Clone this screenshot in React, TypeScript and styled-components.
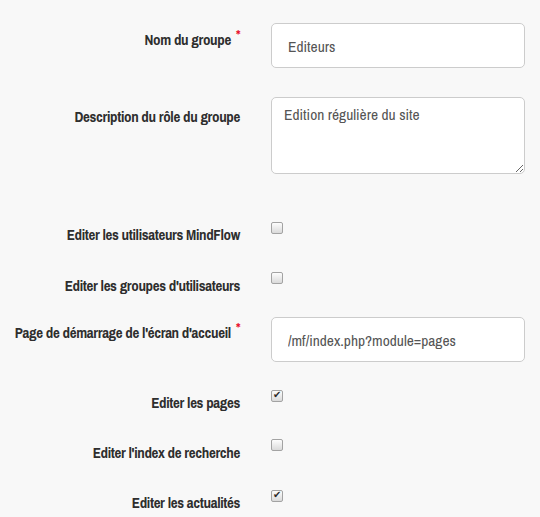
import * as React from "react";
import styled, { createGlobalStyle } from "styled-components";

const GlobalStyle = createGlobalStyle`
  html, body {
    margin: 0;
    padding: 0;
    background: #f8f8f8;
  }
  body {
    font-family: "Liberation Sans Narrow", "Archivo Narrow", "DejaVu Sans Condensed", sans-serif;
    color: #333;
  }
`;

const Form = styled.form`
  display: flex;
  flex-direction: column;
  padding-top: 23px;
`;

const Row = styled.div<{ $height: number }>`
  display: grid;
  grid-template-columns: 240px 254px;
  column-gap: 31px;
  align-items: start;
  height: ${(p) => p.$height}px;
`;

const Label = styled.label<{ $offset: number }>`
  justify-self: end;
  padding-top: ${(p) => p.$offset}px;
  font-size: 15px;
  font-weight: 700;
  letter-spacing: -0.35px;
  line-height: 17px;
  color: #2e2e2e;
  text-align: right;
  white-space: nowrap;
`;

const Required = styled.span`
  color: #e8112d;
  font-size: 14px;
  position: relative;
  top: -5px;
  margin-left: 5px;
`;

const TextInput = styled.input`
  box-sizing: border-box;
  width: 254px;
  height: 45px;
  padding: 2px 16px 0;
  border: 1px solid #ccc;
  border-radius: 5px;
  background: #fff;
  font-family: inherit;
  font-size: 15.5px;
  color: #555;
  outline: none;
`;

const TextArea = styled.textarea`
  box-sizing: border-box;
  width: 254px;
  height: 77px;
  padding: 8px 12px;
  border: 1px solid #ccc;
  border-radius: 5px;
  background: #fff;
  font-family: inherit;
  font-size: 15.5px;
  line-height: 18px;
  color: #555;
  resize: both;
  outline: none;
`;

const Check = styled.input`
  appearance: none;
  box-sizing: border-box;
  width: 12px;
  height: 12px;
  margin: 0;
  border: 1px solid #a3a3a3;
  border-radius: 2px;
  background: linear-gradient(#fdfdfd, #dadada);
  position: relative;

  &:checked::after {
    content: "✔";
    position: absolute;
    left: 1px;
    top: -2px;
    font-family: "DejaVu Sans", sans-serif;
    font-size: 10px;
    font-weight: 700;
    color: #2a2a2a;
  }
`;

type Field =
  | { kind: "text"; label: string; value: string; required?: boolean; offset: number; height: number }
  | { kind: "area"; label: string; value: string; offset: number; height: number }
  | { kind: "check"; label: string; checked: boolean; offset: number; height: number };

const fields: Field[] = [
  { kind: "text", label: "Nom du groupe", value: "Editeurs", required: true, offset: 8, height: 74 },
  { kind: "area", label: "Description du rôle du groupe", value: "Edition régulière du site", offset: 11, height: 125 },
  { kind: "check", label: "Editer les utilisateurs MindFlow", checked: false, offset: 4, height: 50 },
  { kind: "check", label: "Editer les groupes d'utilisateurs", checked: false, offset: 5, height: 45 },
  { kind: "text", label: "Page de démarrage de l'écran d'accueil", value: "/mf/index.php?module=pages", required: true, offset: 7, height: 73 },
  { kind: "check", label: "Editer les pages", checked: true, offset: 4, height: 49 },
  { kind: "check", label: "Editer l'index de recherche", checked: false, offset: 5, height: 51 },
  { kind: "check", label: "Editer les actualités", checked: true, offset: 4, height: 27 },
];

const App = () => {
  return (
    <>
      <GlobalStyle />
      <Form>
        {fields.map((f) => (
          <Row key={f.label} $height={f.height}>
            <Label $offset={f.offset}>
              {f.label}
              {f.kind === "text" && f.required && <Required>*</Required>}
            </Label>
            {f.kind === "text" && <TextInput defaultValue={f.value} />}
            {f.kind === "area" && <TextArea defaultValue={f.value} />}
            {f.kind === "check" && <Check type="checkbox" defaultChecked={f.checked} />}
          </Row>
        ))}
      </Form>
    </>
  );
};

export default App;
